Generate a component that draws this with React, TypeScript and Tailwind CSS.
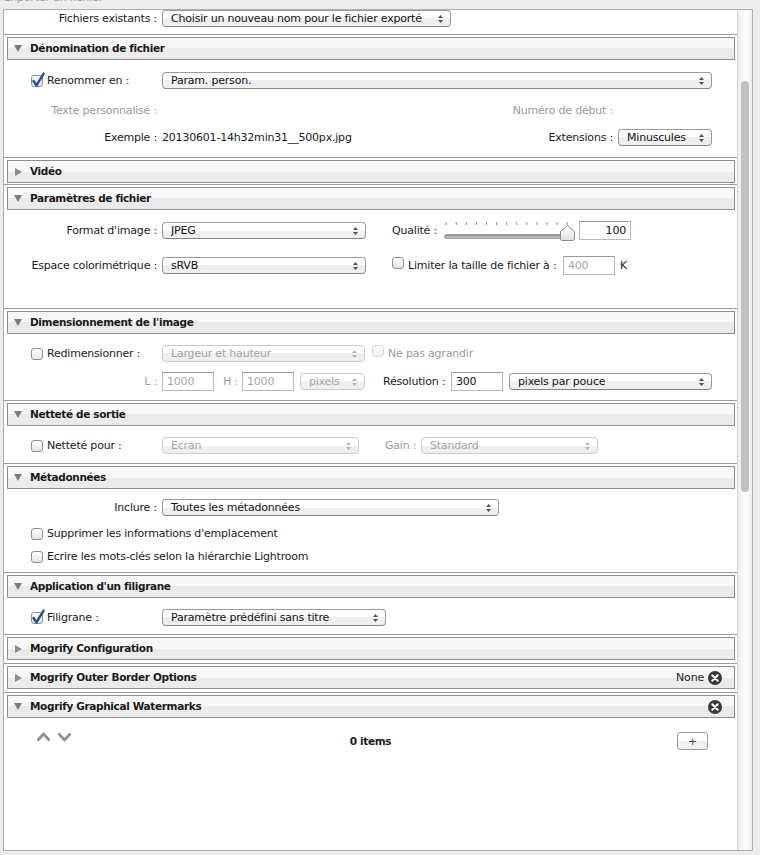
import clsx from "clsx";
import type { ReactNode } from "react";

function Check({ checked, disabled }: { checked?: boolean; disabled?: boolean }) {
  return (
    <span
      className={clsx(
        "relative inline-block h-[12px] w-[12px] shrink-0 rounded-[3px] border bg-[linear-gradient(to_bottom,#ffffff,#e4e4e4)]",
        disabled ? "border-[#c4c4c4]" : "border-[#8f8f8f]"
      )}
    >
      {checked && (
        <svg className="absolute -left-[1px] -top-[4px]" width="15" height="16" viewBox="0 0 15 16">
          <path
            d="M2.5 9 L5.5 13.3 L12.6 1.6"
            fill="none"
            stroke="#284c9c"
            strokeWidth="2.4"
            strokeLinecap="round"
            strokeLinejoin="round"
          />
        </svg>
      )}
    </span>
  );
}

function Arrows({ disabled }: { disabled?: boolean }) {
  return (
    <svg width="5" height="8" viewBox="0 0 5 8" className="shrink-0">
      <path d="M0 3 L2.5 0 L5 3Z M0 5 L2.5 8 L5 5Z" fill={disabled ? "#b8b8b8" : "#505050"} />
    </svg>
  );
}

function Select({ text, className, disabled }: { text: string; className?: string; disabled?: boolean }) {
  return (
    <div
      className={clsx(
        "flex h-[17px] shrink-0 items-center justify-between rounded-[4px] border bg-[linear-gradient(to_bottom,#ffffff_50%,#efefef_50%)] pl-[8px] pr-[7px]",
        disabled ? "border-[#cbcbcb] text-[#a3a3a3]" : "border-[#9a9a9a] border-b-[#858585] text-[#111]",
        className
      )}
    >
      <span className="truncate whitespace-nowrap">{text}</span>
      <Arrows disabled={disabled} />
    </div>
  );
}

function Field({ value, className, disabled, right }: { value: string; className?: string; disabled?: boolean; right?: boolean }) {
  return (
    <div
      className={clsx(
        "flex h-[19px] shrink-0 items-center border border-[#b8b8b8] border-t-[#9a9a9a] bg-white px-[4px]",
        right && "justify-end",
        disabled ? "text-[#a8a8a8]" : "text-[#111]",
        className
      )}
    >
      {value}
    </div>
  );
}

function Label({ children, gray }: { children: ReactNode; gray?: boolean }) {
  return (
    <div className={clsx("w-[154px] shrink-0 whitespace-nowrap pr-[1px] text-right", gray && "text-[#9a9a9a]")}>
      {children}
    </div>
  );
}

function CheckLabel({ label, checked }: { label: string; checked?: boolean }) {
  return (
    <div className="flex w-[154px] shrink-0 items-center gap-[4px] whitespace-nowrap pl-[27px]">
      <Check checked={checked} />
      <span>{label}</span>
    </div>
  );
}

function Row({ children, className }: { children: ReactNode; className?: string }) {
  return <div className={clsx("flex h-[17px] items-center whitespace-nowrap", className)}>{children}</div>;
}

function CloseIcon() {
  return (
    <svg width="14" height="14" viewBox="0 0 14 14">
      <circle cx="7" cy="7" r="7" fill="#3a3a3a" />
      <path d="M4.3 4.3 L9.7 9.7 M9.7 4.3 L4.3 9.7" stroke="#fff" strokeWidth="2" strokeLinecap="round" />
    </svg>
  );
}

function Section({
  title,
  open,
  right,
  children,
}: {
  title: string;
  open?: boolean;
  right?: ReactNode;
  children?: ReactNode;
}) {
  return (
    <div className="border-t border-[#9c9c9c]">
      <div className="ml-[3px] mr-[2px] mt-[2px] flex h-[23px] items-center border border-[#8e8e8e] bg-[linear-gradient(to_bottom,#f8f8f8_50%,#ebebeb_50%)] pr-[12px]">
        {open ? (
          <svg width="8" height="7" viewBox="0 0 8 7" className="ml-[6px] shrink-0">
            <path d="M0 0 H8 L4 7Z" fill="#7c7c7c" />
          </svg>
        ) : (
          <svg width="7" height="8" viewBox="0 0 7 8" className="ml-[7px] shrink-0">
            <path d="M0 0 L7 4 L0 8Z" fill="#8c8c8c" />
          </svg>
        )}
        <span className="ml-[8px] flex-1 text-[10.5px] font-bold tracking-[-0.35px] text-[#1a1a1a]">{title}</span>
        {right}
      </div>
      {children}
    </div>
  );
}

function Slider() {
  const ticks = Array.from({ length: 13 }, (_, i) => 1.7 + i * 10.08);
  return (
    <svg width="132" height="20" viewBox="0 0 132 20" className="shrink-0">
      {ticks.map((x) => (
        <rect key={x} x={x} y="1" width="1" height="3" fill="#8a8a8a" />
      ))}
      <defs>
        <linearGradient id="trk" x1="0" y1="0" x2="0" y2="1">
          <stop offset="0" stopColor="#8d8d8d" />
          <stop offset="1" stopColor="#cfcfcf" />
        </linearGradient>
        <linearGradient id="knb" x1="0" y1="0" x2="0" y2="1">
          <stop offset="0" stopColor="#ffffff" />
          <stop offset="1" stopColor="#e2e2e2" />
        </linearGradient>
      </defs>
      <rect x="0.5" y="13.5" width="124" height="4" rx="2" fill="url(#trk)" stroke="#8a8a8a" strokeWidth="0.8" />
      <path
        d="M123.5 4.5 L130.5 10.5 L130.5 17.5 Q130.5 19.5 128.5 19.5 L118.5 19.5 Q116.5 19.5 116.5 17.5 L116.5 10.5 Z"
        fill="url(#knb)"
        stroke="#8a8a8a"
      />
    </svg>
  );
}

export default function App() {
  return (
    <div className="flex h-[855px] w-[760px] flex-col overflow-hidden bg-[#ececec] font-['DejaVu_Sans',sans-serif] text-[11px] leading-[17px] tracking-[-0.2px] text-[#1a1a1a]">
      <div className="h-[9px] overflow-hidden pl-[4px] text-[#a0a0a0]">
        <div className="-mt-[9px] leading-[14px]">Exporter un fichier</div>
      </div>
      <div className="ml-[3px] flex h-[842px] w-[750px] border border-[#b0b0b0] bg-white">
        <div className="flex w-[733px] flex-col">
          <div className="h-[24px]">
            <Row className="h-[16px]">
              <Label>Fichiers existants :</Label>
              <Select className="ml-[4px] w-[289px]" text="Choisir un nouveau nom pour le fichier exporté" />
            </Row>
          </div>

          <Section title="Dénomination de fichier" open>
            <div className="flex flex-col pb-[11px] pt-[12px]">
              <Row>
                <CheckLabel label="Renommer en :" checked />
                <Select className="ml-[4px] w-[550px]" text="Param. person." />
              </Row>
              <Row className="mt-[13px] pr-[124px]">
                <Label gray>Texte personnalisé :</Label>
                <span className="flex-1 text-right text-[#9a9a9a]">Numéro de début :</span>
              </Row>
              <Row className="mt-[10px] pr-[25px]">
                <Label>Exemple :</Label>
                <span className="ml-[4px] flex-1">20130601-14h32min31__500px.jpg</span>
                <span>Extensions :</span>
                <Select className="ml-[5px] w-[94px]" text="Minuscules" />
              </Row>
            </div>
          </Section>

          <Section title="Vidéo">
            <div className="h-[1px]" />
          </Section>

          <Section title="Paramètres de fichier" open>
            <div className="flex flex-col pb-[34px] pt-[12px]">
              <Row>
                <Label>Format d'image :</Label>
                <Select className="ml-[4px] w-[204px]" text="JPEG" />
                <span className="ml-[26px] w-[52px]">Qualité :</span>
                <Slider />
                <Field className="ml-[3px] w-[52px]" value="100" right />
              </Row>
              <Row className="mt-[18px]">
                <Label>Espace colorimétrique :</Label>
                <Select className="ml-[4px] w-[204px]" text="sRVB" />
                <span className="ml-[26px]">
                  <Check />
                </span>
                <span className="ml-[4px] w-[155px]">Limiter la taille de fichier à :</span>
                <Field className="w-[52px]" value="400" disabled />
                <span className="ml-[5px]">K</span>
              </Row>
            </div>
          </Section>

          <Section title="Dimensionnement de l'image" open>
            <div className="flex flex-col pb-[10px] pt-[11px]">
              <Row>
                <CheckLabel label="Redimensionner :" />
                <Select className="ml-[4px] w-[203px]" text="Largeur et hauteur" disabled />
                <span className="ml-[7px] opacity-60">
                  <Check disabled />
                </span>
                <span className="ml-[4px] text-[#9a9a9a]">Ne pas agrandir</span>
              </Row>
              <Row className="mt-[11px]">
                <Label gray>L :</Label>
                <Field className="ml-[4px] w-[52px]" value="1000" disabled />
                <span className="w-[28px] pr-[4px] text-right text-[#9a9a9a]">H :</span>
                <Field className="w-[52px]" value="1000" disabled />
                <Select className="ml-[6px] w-[65px]" text="pixels" disabled />
                <span className="ml-[18px] w-[68px]">Résolution :</span>
                <Field className="w-[52px]" value="300" />
                <Select className="ml-[6px] w-[203px]" text="pixels par pouce" />
              </Row>
            </div>
          </Section>

          <Section title="Netteté de sortie" open>
            <div className="flex flex-col pb-[9px] pt-[11px]">
              <Row>
                <CheckLabel label="Netteté pour :" />
                <Select className="ml-[4px] w-[197px]" text="Ecran" disabled />
                <span className="ml-[26px] w-[36px] text-[#9a9a9a]">Gain :</span>
                <Select className="w-[177px]" text="Standard" disabled />
              </Row>
            </div>
          </Section>

          <Section title="Métadonnées" open>
            <div className="flex flex-col pb-[7px] pt-[10px]">
              <Row>
                <Label>Inclure :</Label>
                <Select className="ml-[4px] w-[337px]" text="Toutes les métadonnées" />
              </Row>
              <Row className="mt-[9px]">
                <div className="flex items-center gap-[4px] pl-[27px]">
                  <Check />
                  <span>Supprimer les informations d'emplacement</span>
                </div>
              </Row>
              <Row className="mt-[6px]">
                <div className="flex items-center gap-[4px] pl-[27px]">
                  <Check />
                  <span>Ecrire les mots-clés selon la hiérarchie Lightroom</span>
                </div>
              </Row>
            </div>
          </Section>

          <Section title="Application d'un filigrane" open>
            <div className="flex flex-col pb-[8px] pt-[11px]">
              <Row>
                <CheckLabel label="Filigrane :" checked />
                <Select className="ml-[4px] w-[224px]" text="Paramètre prédéfini sans titre" />
              </Row>
            </div>
          </Section>

          <Section title="Mogrify Configuration">
            <div className="h-[3px]" />
          </Section>

          <Section
            title="Mogrify Outer Border Options"
            right={
              <div className="flex items-center gap-[4px]">
                <span>None</span>
                <CloseIcon />
              </div>
            }
          >
            <div className="h-[3px]" />
          </Section>

          <Section title="Mogrify Graphical Watermarks" open right={<CloseIcon />}>
            <div className="mt-[14px] grid h-[18px] grid-cols-3 items-center">
              <div className="-mt-[8px] flex items-center gap-[6px] pl-[32px]">
                <svg width="15" height="10" viewBox="0 0 15 10">
                  <path d="M1.5 8.5 L7.5 2 L13.5 8.5" fill="none" stroke="#8e8e8e" strokeWidth="2.6" />
                </svg>
                <svg width="15" height="10" viewBox="0 0 15 10">
                  <path d="M1.5 1.5 L7.5 8 L13.5 1.5" fill="none" stroke="#8e8e8e" strokeWidth="2.6" />
                </svg>
              </div>
              <div className="text-center text-[10.5px] font-bold tracking-[-0.35px]">0 items</div>
              <div className="flex justify-end pr-[29px]">
                <div className="flex h-[18px] w-[31px] items-center justify-center rounded-[3px] border border-[#9a9a9a] bg-[linear-gradient(to_bottom,#ffffff_50%,#efefef_50%)] text-[#444]">
                  +
                </div>
              </div>
            </div>
          </Section>
        </div>
        <div className="w-[15px] border-l border-[#d6d6d6] bg-[linear-gradient(to_right,#ececec,#f9f9f9_35%,#f9f9f9_65%,#efefef)]">
          <div className="ml-[3px] mt-[71px] h-[411px] w-[8px] rounded-full bg-[#c1c1c1]" />
        </div>
      </div>
    </div>
  );
}
